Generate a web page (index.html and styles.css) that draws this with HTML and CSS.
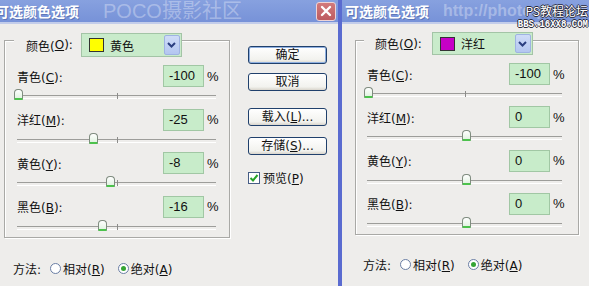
FILE: index.html
```html
<!DOCTYPE html>
<html lang="zh-CN">
<head>
    <meta charset="UTF-8">
    <title>可选颜色选项</title>
    <link rel="stylesheet" href="styles.css">
</head>
<body>
<div class="screen">

    <div class="dialog dialog-left">
        <div class="titlebar">
            <span class="title">可选颜色选项</span>
            <span class="watermark">POCO摄影社区</span>
            <span class="close">
                <svg width="12" height="12" viewBox="0 0 12 12"><path d="M2 2 L10 10 M10 2 L2 10" stroke="#fff" stroke-width="2.4" stroke-linecap="round"/></svg>
            </span>
        </div>
        <div class="body">
            <div class="main">
                <div class="group">
                    <div class="group-head">
                        <span class="head-label">颜色(<u>O</u>):</span>
                        <div class="select">
                            <span class="swatch swatch-yellow"></span>
                            <span class="select-text">黄色</span>
                            <span class="drop"><svg width="9" height="6" viewBox="0 0 9 6"><path d="M1 1 L4.5 4.5 L8 1" stroke="#2b3f80" stroke-width="2" fill="none"/></svg></span>
                        </div>
                    </div>
                    <div class="channel">
                        <div class="row"><span class="label">青色(<u>C</u>):</span><span class="value">-100</span><span class="pct">%</span></div>
                        <div class="slider"><span class="thumb" style="left: 0%"></span></div>
                    </div>
                    <div class="channel">
                        <div class="row"><span class="label">洋红(<u>M</u>):</span><span class="value">-25</span><span class="pct">%</span></div>
                        <div class="slider"><span class="thumb" style="left: 37.5%"></span></div>
                    </div>
                    <div class="channel">
                        <div class="row"><span class="label">黄色(<u>Y</u>):</span><span class="value">-8</span><span class="pct">%</span></div>
                        <div class="slider"><span class="thumb" style="left: 46%"></span></div>
                    </div>
                    <div class="channel">
                        <div class="row"><span class="label">黑色(<u>B</u>):</span><span class="value">-16</span><span class="pct">%</span></div>
                        <div class="slider"><span class="thumb" style="left: 42%"></span></div>
                    </div>
                </div>
                <div class="method">
                    <span>方法:</span>
                    <span class="radio"></span><span>相对(<u>R</u>)</span>
                    <span class="radio radio-on"></span><span>绝对(<u>A</u>)</span>
                </div>
            </div>
            <div class="side">
                <button class="btn btn-default">确定</button>
                <button class="btn btn-cancel">取消</button>
                <button class="btn btn-load">载入(<u>L</u>)...</button>
                <button class="btn btn-save">存储(<u>S</u>)...</button>
                <div class="check">
                    <span class="checkbox"><svg width="10" height="10" viewBox="0 0 10 10"><path d="M1.5 5 L4 7.5 L8.5 2" stroke="#27a327" stroke-width="2" fill="none"/></svg></span>
                    <span>预览(<u>P</u>)</span>
                </div>
            </div>
        </div>
    </div>

    <div class="divider"></div>

    <div class="dialog dialog-right">
        <div class="titlebar">
            <span class="title">可选颜色选项</span>
            <span class="watermark watermark-url">http://photo.poco.cn</span>
        </div>
        <div class="body">
            <div class="main">
                <div class="group">
                    <div class="group-head">
                        <span class="head-label">颜色(<u>O</u>):</span>
                        <div class="select">
                            <span class="swatch swatch-magenta"></span>
                            <span class="select-text">洋红</span>
                            <span class="drop"><svg width="9" height="6" viewBox="0 0 9 6"><path d="M1 1 L4.5 4.5 L8 1" stroke="#2b3f80" stroke-width="2" fill="none"/></svg></span>
                        </div>
                    </div>
                    <div class="channel">
                        <div class="row"><span class="label">青色(<u>C</u>):</span><span class="value">-100</span><span class="pct">%</span></div>
                        <div class="slider"><span class="thumb" style="left: 0%"></span></div>
                    </div>
                    <div class="channel">
                        <div class="row"><span class="label">洋红(<u>M</u>):</span><span class="value">0</span><span class="pct">%</span></div>
                        <div class="slider"><span class="thumb" style="left: 50%"></span></div>
                    </div>
                    <div class="channel">
                        <div class="row"><span class="label">黄色(<u>Y</u>):</span><span class="value">0</span><span class="pct">%</span></div>
                        <div class="slider"><span class="thumb" style="left: 50%"></span></div>
                    </div>
                    <div class="channel">
                        <div class="row"><span class="label">黑色(<u>B</u>):</span><span class="value">0</span><span class="pct">%</span></div>
                        <div class="slider"><span class="thumb" style="left: 50%"></span></div>
                    </div>
                </div>
                <div class="method">
                    <span>方法:</span>
                    <span class="radio"></span><span>相对(<u>R</u>)</span>
                    <span class="radio radio-on"></span><span>绝对(<u>A</u>)</span>
                </div>
            </div>
        </div>
    </div>

    <div class="stamp">
        <div class="stamp-cn">PS教程论坛</div>
        <div class="stamp-url">BBS.16XX8.COM</div>
    </div>
</div>
</body>
</html>
```

FILE: styles.css
```css
* {
    box-sizing: border-box;
}

html, body {
    margin: 0;
    padding: 0;
}

body {
    width: 589px;
    height: 286px;
    overflow: hidden;
    background: #eeedeb;
    color: #111;
    font-family: "DejaVu Sans", "Noto Sans CJK SC", sans-serif;
    font-size: 12px;
}

u {
    text-decoration: underline;
    text-underline-offset: 1px;
}

.screen {
    position: relative;
    display: flex;
    height: 286px;
}

.dialog {
    display: flex;
    flex-direction: column;
    overflow: hidden;
    background: #eeedeb;
}

.dialog-left {
    width: 338px;
    --pitch: 43.5px;
}

.dialog-right {
    flex: 1;
    --pitch: 43.3px;
}

.divider {
    width: 4px;
    background: #5a6bd0;
}

/* title bar */
.titlebar {
    flex-shrink: 0;
    height: 24px;
    display: flex;
    align-items: center;
    white-space: nowrap;
    background: linear-gradient(#87a1df, #7792d8);
    border-bottom: 2px solid #c3cdea;
}

.title {
    color: #fff;
    font-family: "Noto Sans CJK SC", sans-serif;
    font-size: 14px;
    font-weight: bold;
    line-height: 22px;
    text-shadow: 1px 1px 0 rgba(40, 60, 120, 0.35);
}

.dialog-left .title {
    margin-left: -5px;
}

.dialog-right .title {
    margin-left: 3px;
}

.watermark {
    margin-left: 24px;
    color: rgba(255, 255, 255, 0.33);
    font-family: "Liberation Sans", "Noto Sans CJK SC", sans-serif;
    font-size: 20px;
    line-height: 22px;
}

.watermark-url {
    margin-left: 14px;
    font-size: 16px;
    font-weight: bold;
}

.close {
    margin-left: auto;
    margin-right: 2px;
    width: 20px;
    height: 19px;
    flex-shrink: 0;
    display: flex;
    align-items: center;
    justify-content: center;
    background: linear-gradient(#d27a7c, #bd5b60);
    border: 1px solid #eed4d6;
    border-radius: 3px;
}

/* dialog body */
.body {
    flex: 1;
    display: flex;
}

.main {
    padding-top: 16px;
}

.dialog-left .main {
    padding-left: 4px;
}

.dialog-right .main {
    padding-left: 13px;
}

.group {
    border: 1px solid #a9a9a6;
    box-shadow: inset 1px 1px 0 #fff, 1px 1px 0 #fff;
}

.dialog-left .group {
    width: 226px;
    padding: 0 13px 0 12px;
}

.dialog-right .group {
    width: 224px;
    padding: 0 16px 0 11px;
}

.group-head {
    display: flex;
    align-items: center;
    margin: -8px 0 8px -3px;
    height: 24px;
}

.dialog-right .group-head {
    margin-top: -9px;
    height: 23px;
}

.head-label {
    align-self: stretch;
    display: flex;
    align-items: center;
    padding: 0 8px 0 12px;
    background: #eeedeb;
}

.dialog-right .head-label {
    padding: 0 10px 0 11px;
}

.select {
    width: 101px;
    height: 100%;
    display: flex;
    align-items: center;
    background: #c9ebcb;
    border: 1px solid #a3c4a6;
}

.swatch {
    width: 15px;
    height: 14px;
    margin-left: 7px;
    border: 1px solid #333;
}

.swatch-yellow {
    background: #ffff00;
}

.swatch-magenta {
    background: #c700c7;
}

.select-text {
    margin-left: 6px;
    font-family: "Noto Sans CJK SC", sans-serif;
}

.drop {
    margin-left: auto;
    margin-right: 1px;
    width: 16px;
    height: calc(100% - 2px);
    display: flex;
    align-items: center;
    justify-content: center;
    background: linear-gradient(#cfdcf8, #b3c6f0);
    border: 1px solid #9fb3e2;
    border-radius: 2px;
}

/* channel rows */
.channel {
    height: var(--pitch);
}

.channel:last-child {
    height: calc(var(--pitch) - 2px);
}

.row {
    display: flex;
    align-items: center;
    height: 22px;
}

.label {
    flex: 1;
}

.value {
    width: 41px;
    height: 22px;
    padding-left: 5px;
    line-height: 20px;
    font-family: "Liberation Sans", sans-serif;
    font-size: 13px;
    background: #c8ecca;
    border: 1px solid #a1c7a4;
}

.pct {
    width: 12px;
    padding-left: 3px;
    font-family: "Liberation Sans", sans-serif;
    font-size: 13px;
}

.slider {
    position: relative;
    height: calc(var(--pitch) - 22px);
}

.slider::before {
    content: "";
    position: absolute;
    top: 8px;
    left: 0;
    right: 0;
    height: 2px;
    border-top: 1px solid #9d9d9a;
    border-bottom: 1px solid #fff;
}

.slider::after {
    content: "";
    position: absolute;
    top: 6px;
    left: 50%;
    width: 1px;
    height: 6px;
    background: #8c8c8a;
}

.thumb {
    position: absolute;
    top: 2px;
    width: 9px;
    height: 11px;
    margin-left: -3px;
    z-index: 1;
    background: linear-gradient(#ffffff, #e2f3e2);
    border: 1px solid #7f8c7f;
    border-bottom: 2px solid #4cc24c;
    border-radius: 4px 4px 1px 1px;
}

/* method radios */
.method {
    display: flex;
    align-items: center;
    height: 18px;
    margin-top: 21px;
    padding-left: 9px;
}

.dialog-right .method {
    margin-top: 20px;
    padding-left: 8px;
}

.method > span:first-child {
    margin-right: 9px;
}

.radio {
    width: 11px;
    height: 11px;
    margin-right: 2px;
    border: 1px solid #6a7ea4;
    border-radius: 50%;
    background: #fff;
    display: flex;
    align-items: center;
    justify-content: center;
}

.radio-on {
    margin-left: 13px;
}

.radio-on::after {
    content: "";
    width: 5px;
    height: 5px;
    border-radius: 50%;
    background: #35a535;
}

/* buttons column */
.side {
    margin-left: 18px;
    padding-top: 22px;
    display: flex;
    flex-direction: column;
    align-items: flex-start;
}

.btn {
    width: 79px;
    height: 18px;
    padding: 0;
    font-family: "DejaVu Sans", "Noto Sans CJK SC", sans-serif;
    font-size: 12px;
    line-height: 16px;
    color: #111;
    background: linear-gradient(#ffffff, #f2f2ee 80%, #d9d5cc);
    border: 1px solid #20406c;
    border-radius: 3px;
}

.btn-default {
    box-shadow: inset 0 0 0 1px #8fb0e0;
}

.btn-cancel {
    margin-top: 9px;
}

.btn-load {
    margin-top: 17px;
}

.btn-save {
    margin-top: 11px;
}

.check {
    margin-top: 14px;
    display: flex;
    align-items: center;
}

.checkbox {
    width: 12px;
    height: 12px;
    margin-right: 3px;
    background: #fff;
    border: 1px solid #465d85;
    display: flex;
    align-items: center;
    justify-content: center;
}

/* forum stamp over the corner */
.stamp {
    position: absolute;
    top: 4px;
    right: 1px;
    color: #fff;
    text-align: right;
    text-shadow: 1px 0 0 #2a2a3a, -1px 0 0 #2a2a3a, 0 1px 0 #2a2a3a, 0 -1px 0 #2a2a3a;
}

.stamp-cn {
    font-family: "Noto Sans CJK SC", sans-serif;
    font-size: 12px;
    line-height: 14px;
}

.stamp-url {
    font-family: "Liberation Mono", monospace;
    font-size: 9px;
    font-weight: bold;
    line-height: 10px;
    transform: scaleY(1.25);
    transform-origin: right top;
}
```
